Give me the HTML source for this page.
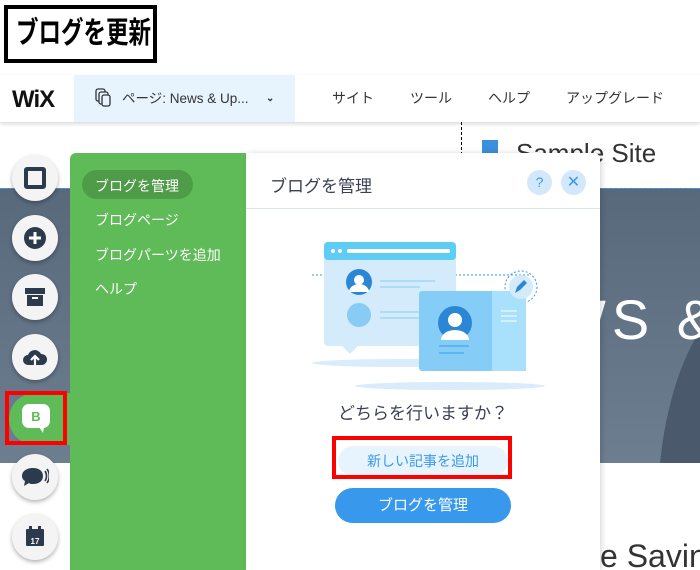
<!DOCTYPE html>
<html><head><meta charset="utf-8"><style>
*{margin:0;padding:0;box-sizing:border-box}
html{width:700px;height:570px;overflow:hidden}
body{width:700px;height:570px;overflow:hidden;background:#fff;position:relative;font-family:"Liberation Sans","Noto Sans CJK JP",sans-serif}
.abs{position:absolute;white-space:nowrap}
.title{left:4px;top:5px;width:153px;height:58px;border:4px solid #000;font-size:30px;font-weight:bold;line-height:50px;color:#000;overflow:hidden}
.title span{display:inline-block;transform:scaleX(0.75);transform-origin:0 50%;margin-left:8px}
.bar{left:0;top:75px;width:700px;height:47px;background:#fff;box-shadow:0 2px 4px rgba(0,0,0,.15);z-index:2}
.menu{top:0;line-height:47px;font-size:14px;color:#333}
.circ{left:12px;width:46px;height:46px;border-radius:50%;background:#f4f4f4;box-shadow:0 2px 4px rgba(0,0,0,.3);display:flex;align-items:center;justify-content:center;z-index:4}
</style></head><body>
<div class="abs title"><span>ブログを更新</span></div>
<div class="abs bar">
 <div class="abs" style="left:12px;top:11px;font-size:24px;font-weight:bold;letter-spacing:-1px;color:#111">WiX</div>
 <div class="abs" style="left:74px;top:0;width:221px;height:47px;background:#e8f4fd"></div>
 <svg class="abs" style="left:94px;top:13px" width="18" height="20" viewBox="0 0 18 20" fill="none" stroke="#333" stroke-width="1.3"><rect x="2" y="1" width="9" height="12" rx="2"/><rect x="5" y="4" width="9" height="12" rx="2" fill="#e8f4fd"/><rect x="8" y="7" width="8" height="11" rx="2" fill="#e8f4fd"/></svg>
 <div class="abs menu" style="left:122px;font-size:13.5px">ページ: News &amp; Up...</div>
 <div class="abs menu" style="left:266px;font-size:10px;font-weight:bold">&#8964;</div>
 <div class="abs menu" style="left:332px">サイト</div>
 <div class="abs menu" style="left:410px">ツール</div>
 <div class="abs menu" style="left:488px">ヘルプ</div>
 <div class="abs menu" style="left:566px">アップグレード</div>
</div>
<div class="abs" style="left:461px;top:122px;height:68px;border-left:1.5px dashed #000"></div>
<div class="abs" style="left:482px;top:140px;width:16px;height:18px;background:#3b8fdc"></div>
<div class="abs" style="left:516px;top:138px;font-size:26px;color:#333">Sample Site</div>
<div class="abs" style="left:0;top:188px;width:700px;height:275px;background:linear-gradient(180deg,#58697c,#6c7e90);border-top:1.5px dashed #3899ec;overflow:hidden">
 <svg class="abs" style="left:640px;top:142px" width="60" height="133"><path d="M60 0 C40 30 25 80 20 133 L60 133Z" fill="#4a5a6c"/></svg>
 <div class="abs" style="left:553px;top:98px;font-size:56px;color:#fff;letter-spacing:6px">WS &amp;</div>
</div>
<div class="abs" style="left:600px;top:538px;width:100px;overflow:hidden;font-size:32px;color:#333">e Savin</div>
<!-- sidebar buttons -->
<div class="abs circ" style="top:155px"><div style="width:22px;height:22px;border:4px solid #2b3a4c;border-radius:3px"></div></div>
<div class="abs circ" style="top:215px"><svg width="24" height="24"><circle cx="12" cy="12" r="11" fill="#2b3a4c"/><path d="M12 6v12M6 12h12" stroke="#fff" stroke-width="3"/></svg></div>
<div class="abs circ" style="top:274px"><svg width="24" height="24"><rect x="2" y="3" width="20" height="6" fill="#2b3a4c"/><rect x="4" y="10" width="16" height="11" fill="#2b3a4c"/><rect x="9" y="12" width="6" height="2" fill="#fff"/></svg></div>
<div class="abs circ" style="top:334px"><svg width="26" height="22"><path d="M6 19a5 5 0 010-10 7 7 0 0113-1 5 5 0 011 11z" fill="#2b3a4c"/><path d="M13 19v-8M9 14l4-4 4 4" stroke="#fff" stroke-width="2.2" fill="none"/></svg></div>
<div class="abs" style="left:9px;top:393px;width:62px;height:52px;background:#5fbb57;border-radius:26px 0 0 26px;z-index:5"></div>
<svg class="abs" style="left:9px;top:393px;z-index:6" width="62" height="52"><rect x="13" y="11" width="28" height="24" rx="7" fill="#fff"/><path d="M30 34l4 6 1-6z" fill="#fff"/><text x="27" y="28" font-size="13" font-weight="bold" fill="#5fbb57" text-anchor="middle" font-family="Liberation Sans">B</text></svg>
<div class="abs" style="left:5px;top:391px;width:62px;height:54px;border:4px solid #f00;z-index:7"></div>
<div class="abs circ" style="top:454px"><svg width="28" height="24"><path d="M12 3c6 0 10 3 10 8s-4 8-10 8c-2 0-3 0-4-1l-5 3 1-5c-2-1-3-3-3-5 0-5 5-8 11-8z" fill="#2b3a4c"/><path d="M24 6c2 3 2 7 0 10M26 4c3 4 3 10 0 14" stroke="#2b3a4c" stroke-width="1.6" fill="none"/></svg></div>
<div class="abs circ" style="top:514px"><svg width="24" height="24"><rect x="3" y="4" width="18" height="17" rx="1" fill="#2b3a4c"/><rect x="6" y="1" width="3" height="5" fill="#2b3a4c"/><rect x="15" y="1" width="3" height="5" fill="#2b3a4c"/><text x="12" y="19" font-size="8" fill="#fff" text-anchor="middle" font-weight="bold" font-family="Liberation Sans">17</text></svg></div>
<!-- green panel -->
<div class="abs" style="left:70px;top:153px;width:176px;height:417px;background:#5fbb57;border-radius:6px 0 0 0;z-index:3">
 <div class="abs" style="left:12px;top:17px;width:111px;height:29px;border-radius:15px;background:#4e9c47"></div>
 <div class="abs" style="left:25px;top:23px;color:#fff;font-size:14px">ブログを管理</div>
 <div class="abs" style="left:25px;top:57px;color:#fff;font-size:14px">ブログページ</div>
 <div class="abs" style="left:25px;top:92px;color:#fff;font-size:14px">ブログパーツを追加</div>
 <div class="abs" style="left:25px;top:126px;color:#fff;font-size:14px">ヘルプ</div>
</div>
<!-- white panel -->
<div class="abs" style="left:246px;top:153px;width:354px;height:417px;background:#fff;border-radius:0 6px 0 0;z-index:3;box-shadow:2px 0 6px rgba(0,0,0,.15)">
 <div class="abs" style="left:24px;top:19px;font-size:17px;color:#3b4057">ブログを管理</div>
 <div class="abs" style="left:281px;top:17px;width:25px;height:25px;border-radius:50%;background:#d3e8fb;color:#3899ec;text-align:center;line-height:25px;font-size:14px">?</div>
 <div class="abs" style="left:315px;top:17px;width:25px;height:25px;border-radius:50%;background:#d3e8fb;color:#3899ec;text-align:center;line-height:25px;font-size:16px">✕</div>
 <div class="abs" style="left:0;top:55px;width:354px;height:1px;background:#dbe5ee"></div>
 <svg class="abs" style="left:56px;top:84px" width="245" height="155">
  <ellipse cx="100" cy="126" rx="90" ry="4" fill="#d8ecfb"/>
  <ellipse cx="148" cy="149" rx="95" ry="4" fill="#d8ecfb"/>
  <path d="M10 38h20M97 38h130" stroke="#3899ec" stroke-dasharray="2 2" stroke-width="1"/>
  <circle cx="219" cy="50" r="16" fill="none" stroke="#3899ec" stroke-dasharray="2 2"/>
  <rect x="22" y="5" width="132" height="104" rx="4" fill="#d4ebfc"/>
  <path d="M40 109l8 8 8-8z" fill="#d4ebfc"/>
  <rect x="22" y="5" width="132" height="18" rx="4" fill="#5ecdf5"/>
  <circle cx="31" cy="14" r="2" fill="#fff"/><circle cx="38" cy="14" r="2" fill="#fff"/><rect x="45" y="12" width="103" height="4" rx="2" fill="#fff"/>
  <circle cx="57" cy="45" r="13" fill="#2b87d6"/><circle cx="57" cy="43" r="5" fill="#fff"/><path d="M47 55a10 8 0 0120 0z" fill="#fff"/>
  <circle cx="57" cy="78" r="12" fill="#88cbf5"/>
  <path d="M78 44h55M78 50h40M78 75h60M78 81h50" stroke="#88cbf5" stroke-width="1"/>
  <rect x="117" y="54" width="107" height="80" rx="3" fill="#85cdf6"/>
  <rect x="190" y="54" width="34" height="80" fill="#a9e0fb"/>
  <path d="M199 74h16M199 79h16M199 84h16" stroke="#fff"/>
  <circle cx="153" cy="86" r="17" fill="#2b87d6"/><circle cx="153" cy="83" r="7" fill="#fff"/><path d="M139 103a14 10 0 0128 0z" fill="#fff"/>
  <path d="M137 109h30M137 116h25" stroke="#3899ec" stroke-width="1"/>
  <circle cx="219" cy="50" r="12" fill="#d4ebfc"/><path d="M213 56l2-6 7-7 3 3-7 7z" fill="#2b87d6"/>
 </svg>
 <div class="abs" style="left:0;width:354px;top:246px;text-align:center;font-size:17px;color:#3b4057">どちらを行いますか？</div>
 <div class="abs" style="left:92px;top:293px;width:170px;height:30px;border-radius:15px;background:#e8f4fd;color:#3899ec;text-align:center;line-height:30px;font-size:14px">新しい記事を追加</div>
 <div class="abs" style="left:86px;top:283px;width:180px;height:43px;border:4px solid #f00"></div>
 <div class="abs" style="left:89px;top:335px;width:176px;height:35px;border-radius:18px;background:#3899ec;color:#fff;text-align:center;line-height:35px;font-size:15px">ブログを管理</div>
</div>
</body></html>
